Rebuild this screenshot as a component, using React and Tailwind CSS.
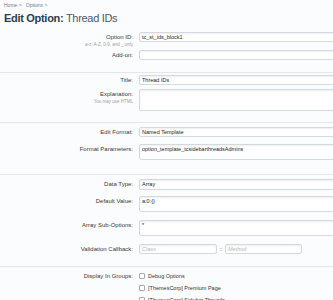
import React from "react";

function Label({ children, hint }) {
  return (
    <div className="w-[133px] shrink-0 text-right">
      <div className="text-[6px] leading-[10px] text-[#3a3a3a]">{children}</div>
      {hint && <div className="text-[4.5px] leading-[5px] text-[#a0a0a0]">{hint}</div>}
    </div>
  );
}

function Box({ children, h = "h-[10px]", extra = "" }) {
  return (
    <div
      className={`${h} ${extra} ml-[6px] w-[200px] shrink-0 border border-[#d3d9df] bg-white rounded-[2px] shadow-[inset_0_1px_2px_rgba(0,0,0,0.07)] px-[2px] text-[5.5px] leading-[8px] text-[#222] overflow-hidden whitespace-nowrap`}
    >
      {children}
    </div>
  );
}

function Check({ children }) {
  return (
    <div className="flex items-center h-[12px]">
      <div className="w-[6px] h-[6px] border border-[#a9a9a9] bg-white rounded-[1px]" />
      <div className="ml-[3px] text-[5.5px] leading-[8px] text-[#333]">{children}</div>
    </div>
  );
}

export default function App() {
  return (
    <div className="w-[333px] h-[300px] overflow-hidden bg-[#fbfcfd] font-['Liberation_Sans',sans-serif]">
      <div className="pl-[4px] pt-[2px] text-[5px] leading-[6px] text-[#6a7f96]">
        Home &gt;&nbsp;&nbsp; Options &gt;
      </div>
      <h1 className="pl-[4px] mt-[3px] text-[11px] leading-[14px] tracking-[-0.3px] text-[#2e3d4c]">
        <span className="font-bold">Edit Option:</span> <span className="text-[#48586a]">Thread IDs</span>
      </h1>

      <div className="mt-[7px]">
        {/* section 1 */}
        <div className="pb-[12px] border-b border-[#e3e7eb]">
          <div className="flex items-start">
            <Label hint="a-z, A-Z, 0-9, and _ only">Option ID:</Label>
            <Box>tc_st_ids_block1</Box>
          </div>
          <div className="flex items-start mt-[3px]">
            <Label>Add-on:</Label>
            <Box />
          </div>
        </div>

        {/* section 2 */}
        <div className="pt-[2px] pb-[11px] border-b border-[#e3e7eb]">
          <div className="flex items-start">
            <Label>Title:</Label>
            <Box>Thread IDs</Box>
          </div>
          <div className="flex items-start mt-[4px]">
            <Label hint="You may use HTML">Explanation:</Label>
            <Box h="h-[22px]" />
          </div>
        </div>

        {/* section 3 */}
        <div className="pt-[4px] pb-[14px] border-b border-[#e3e7eb]">
          <div className="flex items-start">
            <Label>Edit Format:</Label>
            <Box>Named Template</Box>
          </div>
          <div className="flex items-start mt-[7px]">
            <Label>Format Parameters:</Label>
            <Box h="h-[16px]">option_template_tcsidebarthreadsAdmins</Box>
          </div>
        </div>

        {/* section 4 */}
        <div className="pt-[4px] pb-[12px] border-b border-[#e3e7eb]">
          <div className="flex items-start">
            <Label>Data Type:</Label>
            <Box h="h-[11px]">Array</Box>
          </div>
          <div className="flex items-start mt-[6px]">
            <Label>Default Value:</Label>
            <Box h="h-[16px]">a:0:{"{}"}</Box>
          </div>
          <div className="flex items-start mt-[8px]">
            <Label>Array Sub-Options:</Label>
            <Box h="h-[16px]">*</Box>
          </div>
          <div className="flex items-start mt-[8px]">
            <Label>Validation Callback:</Label>
            <div className="ml-[6px] flex items-center">
              <div className="h-[10px] w-[78px] border border-[#d3d9df] bg-white rounded-[2px] shadow-[inset_0_1px_2px_rgba(0,0,0,0.07)] px-[2px] text-[5.5px] leading-[8px] italic text-[#b5b5b5]">
                Class
              </div>
              <div className="w-[8px] text-center text-[5.5px] leading-[8px] text-[#666]">::</div>
              <div className="h-[10px] w-[77px] border border-[#d3d9df] bg-white rounded-[2px] shadow-[inset_0_1px_2px_rgba(0,0,0,0.07)] px-[2px] text-[5.5px] leading-[8px] italic text-[#b5b5b5]">
                Method
              </div>
            </div>
          </div>
        </div>

        {/* section 5 */}
        <div className="pt-[3px] flex items-start">
          <div className="w-[133px] shrink-0 text-right text-[6px] leading-[12px] text-[#3a3a3a]">Display In Groups:</div>
          <div className="ml-[6px] flex flex-col">
            <Check>Debug Options</Check>
            <Check>[ThemesCorp] Premium Page</Check>
            <Check>[ThemesCorp] Sidebar Threads</Check>
          </div>
        </div>
      </div>
    </div>
  );
}
